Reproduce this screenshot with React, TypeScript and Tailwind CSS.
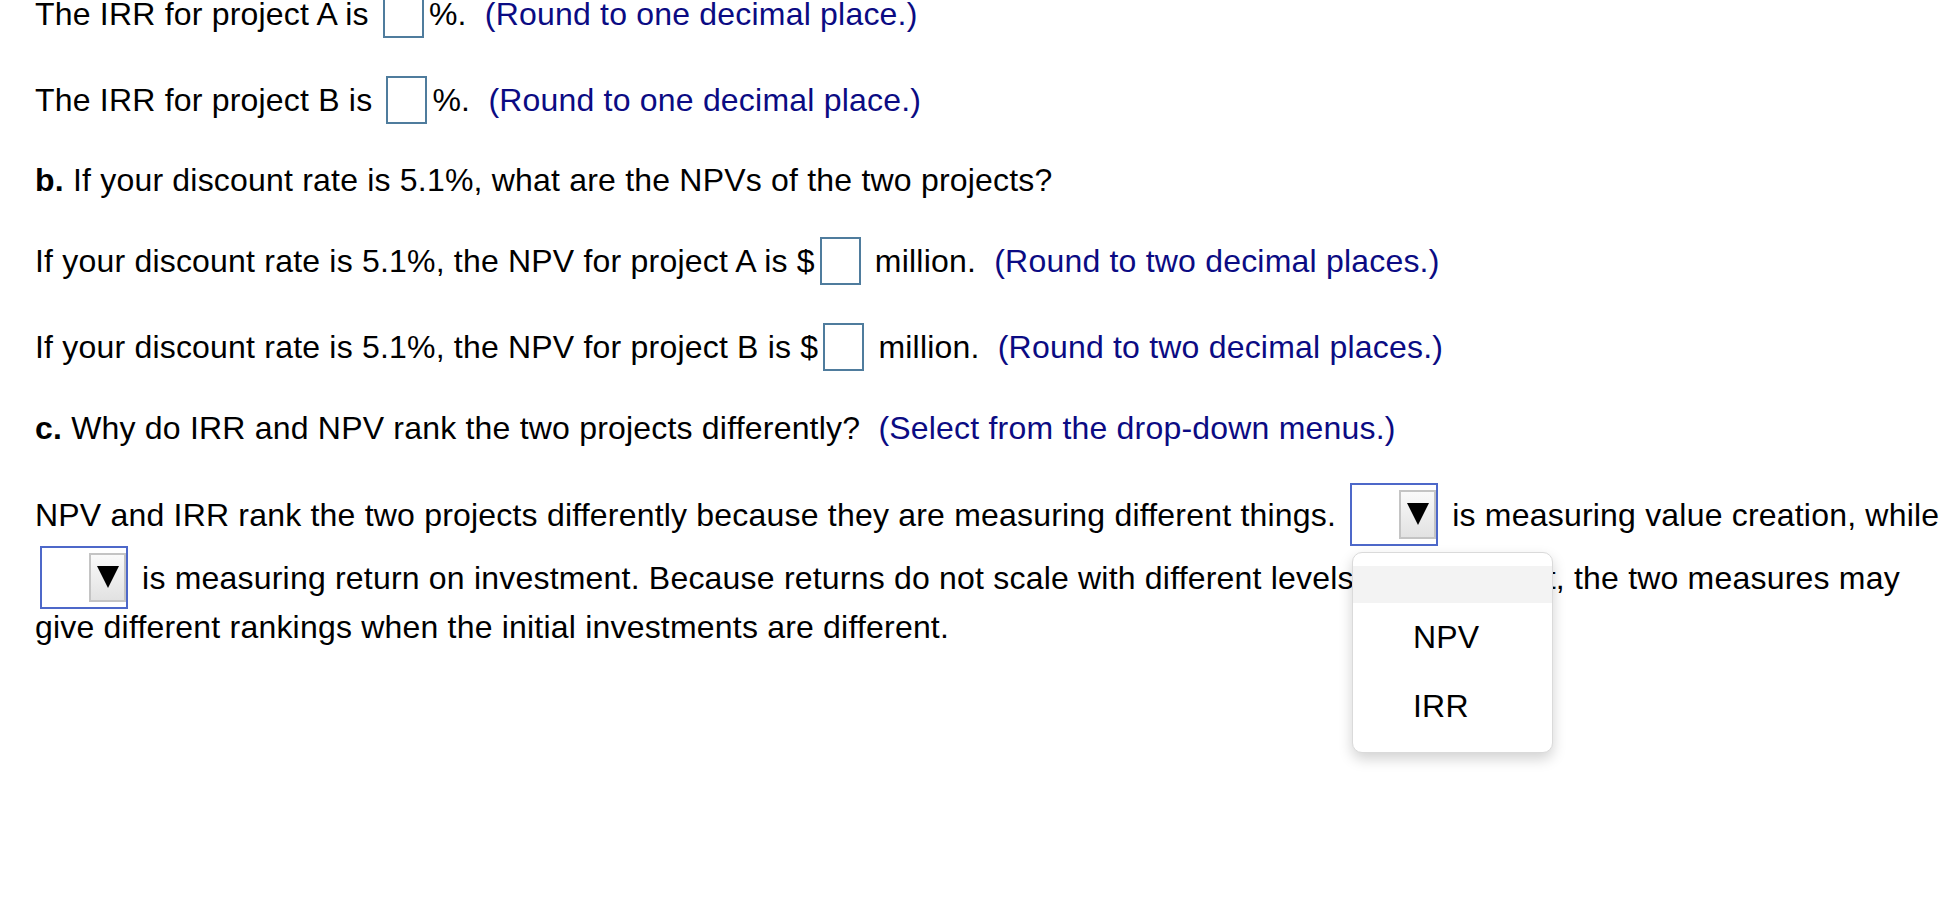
import React from "react";

const Box = () => (
  <span className="inline-block overflow-hidden w-[41px] h-[48px] mx-[5px] border-2 border-[#4f7c9d] bg-white align-[-13px]" />
);

const Select = () => (
  <span className="inline-block overflow-hidden w-[88px] h-[63px] mx-[5px] border-2 border-[#4d68c9] bg-white align-[-20px]">
    <span className="flex h-full items-center justify-end">
      <span className="flex w-[37px] h-[49px] items-center justify-center border-2 border-[#c4c4c4] bg-gradient-to-b from-[#fafafa] to-[#e2e2e2]">
        <svg width="22" height="22" viewBox="0 0 22 22">
          <polygon points="0,0 22,0 11,22" fill="#000" />
        </svg>
      </span>
    </span>
  </span>
);

const Hint = ({ children }: { children: React.ReactNode }) => (
  <span className="text-[#0b0b83]">{children}</span>
);

export default function App() {
  return (
    <div className="min-h-screen bg-white overflow-hidden">
      <div className="relative -mt-[10px] pl-[35px] text-[32px] leading-[1.15] tracking-[0.2px] text-black font-['Liberation_Sans',Arial,sans-serif]">
        <p className="mb-[38px] whitespace-nowrap">
          The IRR for project A is <Box />%.&nbsp; <Hint>(Round to one decimal place.)</Hint>
        </p>
        <p className="mb-[38px] whitespace-nowrap">
          The IRR for project B is <Box />%.&nbsp; <Hint>(Round to one decimal place.)</Hint>
        </p>
        <p className="mb-[38px] whitespace-nowrap">
          <b>b.</b> If your discount rate is 5.1%, what are the NPVs of the two projects?
        </p>
        <p className="mb-[38px] whitespace-nowrap">
          If your discount rate is 5.1%, the NPV for project A is $<Box /> million.&nbsp; <Hint>(Round to two decimal places.)</Hint>
        </p>
        <p className="mb-[39px] whitespace-nowrap">
          If your discount rate is 5.1%, the NPV for project B is $<Box /> million.&nbsp; <Hint>(Round to two decimal places.)</Hint>
        </p>
        <p className="mb-[36px] whitespace-nowrap">
          <b>c.</b> Why do IRR and NPV rank the two projects differently?&nbsp; <Hint>(Select from the drop-down menus.)</Hint>
        </p>
        <p className="whitespace-nowrap">
          NPV and IRR rank the two projects differently because they are measuring different things. <Select /> is measuring value creation, while
          <br />
          <Select /> is measuring return on investment. Because returns do not scale with different levels of investment, the two measures may
          <br />
          give different rankings when the initial investments are different.
        </p>

        {/* open dropdown list of the first select */}
        <div className="absolute left-[1352px] top-[562px] z-10 w-[201px] rounded-[10px] border border-[#dadada] bg-white pt-[13px] pb-[11px] shadow-[0_6px_14px_rgba(0,0,0,0.18)]">
          <div className="h-[37px] bg-[#f3f3f3]" />
          <div className="pl-[60px] py-[16px] leading-[1.15]">NPV</div>
          <div className="pl-[60px] py-[16px] leading-[1.15]">IRR</div>
        </div>
      </div>
    </div>
  );
}
